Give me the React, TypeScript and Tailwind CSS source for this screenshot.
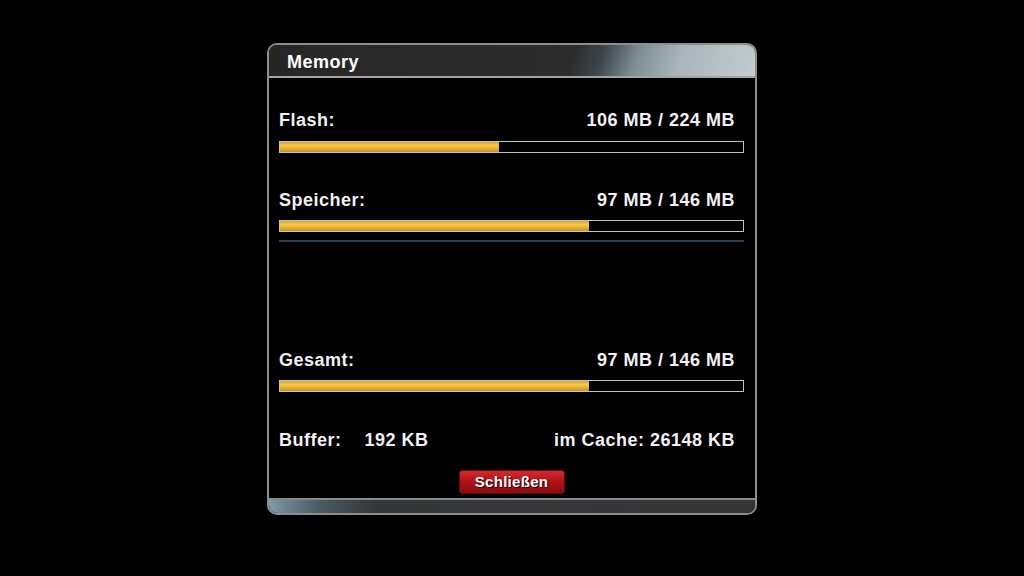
const rows = [
  { label: 'Flash:', value: '106 MB / 224 MB', pct: 47.4 },
  { label: 'Speicher:', value: '97 MB / 146 MB', pct: 66.8 },
]

function Bar({ pct }: { pct: number }) {
  return (
    <div className="h-[12px] border border-[#c4c4c4] bg-black">
      <div
        className="h-full bg-[linear-gradient(to_bottom,#d6a230_0%,#f6c94c_35%,#ebb538_60%,#c79222_100%)]"
        style={{ width: `${pct}%` }}
      />
    </div>
  )
}

function Label({ left, right }: { left: React.ReactNode; right: string }) {
  return (
    <div className="flex h-[20px] items-center justify-between pr-[9px] text-[18px] font-bold leading-[20px] tracking-[0.5px] text-[#f2f2f2]">
      <span>{left}</span>
      <span>{right}</span>
    </div>
  )
}

export default function App() {
  return (
    <div className="flex h-[576px] w-[1024px] justify-center bg-black pt-[43px] font-['Liberation_Sans',Arial,sans-serif]">
      <div className="h-[472px] w-[490px] overflow-hidden rounded-[10px] border-2 border-[#8e8e8e] bg-black">
        <div className="flex h-[33px] items-center border-b-2 border-[#a4a4a4] bg-[linear-gradient(108deg,#262626_0%,#2c2c2c_62%,#3e474c_68%,#7e8d94_75%,#aab6bc_84%,#c2cbcf_100%)] pl-[18px] pt-[3px]">
          <span className="text-[18px] font-bold tracking-[0.5px] text-white">Memory</span>
        </div>

        <div className="px-[10px] pr-[11px]">
          <div className="mt-[32px]">
            <Label left={rows[0].label} right={rows[0].value} />
            <div className="mt-[11px]">
              <Bar pct={rows[0].pct} />
            </div>
          </div>
          <div className="mt-[37px]">
            <Label left={rows[1].label} right={rows[1].value} />
            <div className="mt-[10px]">
              <Bar pct={rows[1].pct} />
            </div>
          </div>
          <div className="mt-[8px] h-[2px] bg-[#2c3e54]" />

          <div className="mt-[108px]">
            <Label left="Gesamt:" right="97 MB / 146 MB" />
            <div className="mt-[10px]">
              <Bar pct={66.8} />
            </div>
          </div>

          <div className="mt-[38px]">
            <Label
              left={
                <>
                  Buffer:<span className="ml-[23px]">192 KB</span>
                </>
              }
              right="im Cache: 26148 KB"
            />
          </div>

          <div className="mt-[20px] flex justify-center">
            <div className="flex h-[24px] w-[106px] items-center justify-center rounded-[3px] border border-[#5a0a0c] bg-[linear-gradient(to_bottom,#d42a2e_0%,#b31318_45%,#8c0b0f_100%)] text-[15px] font-bold tracking-[0.3px] text-white [text-shadow:1px_1px_1px_#000]">
              Schließen
            </div>
          </div>
        </div>

        <div className="mt-[4px] h-[16px] border-t-2 border-[#8a8a8a] bg-[linear-gradient(to_right,#7d9aa8_0%,#4c5c64_10%,#333638_22%,#353535_100%)]" />
      </div>
    </div>
  )
}
